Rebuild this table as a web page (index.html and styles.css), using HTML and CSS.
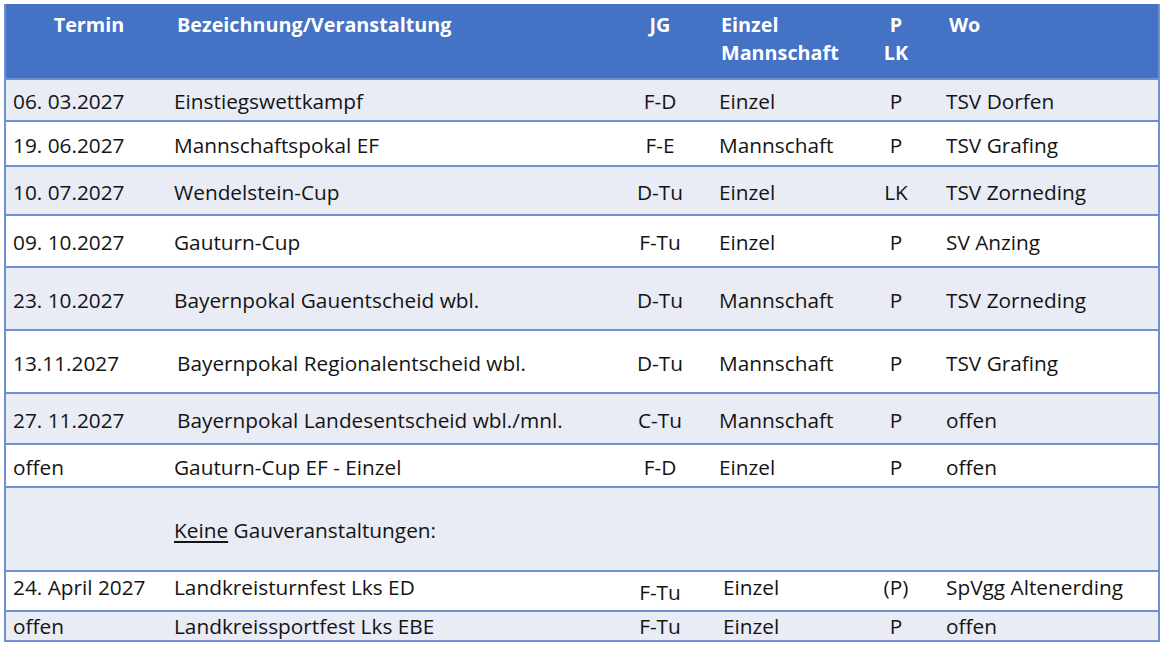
FILE: index.html
```html
<!DOCTYPE html>
<html lang="de">
<head>
<meta charset="utf-8">
<title>Termine</title>
<link rel="stylesheet" href="styles.css">
</head>
<body>
<div class="table">
  <div class="row head">
    <div class="c c1 center">Termin</div>
    <div class="c c2 hpad">Bezeichnung/Veranstaltung</div>
    <div class="c c3 center">JG</div>
    <div class="c c4 hpad4">Einzel<br>Mannschaft</div>
    <div class="c c5 center">P<br>LK</div>
    <div class="c c6 hpad6">Wo</div>
  </div>
  <div class="row band h42">
    <div class="c c1">06. 03.2027</div>
    <div class="c c2">Einstiegswettkampf</div>
    <div class="c c3 center">F-D</div>
    <div class="c c4">Einzel</div>
    <div class="c c5 center">P</div>
    <div class="c c6">TSV Dorfen</div>
  </div>
  <div class="row h45">
    <div class="c c1">19. 06.2027</div>
    <div class="c c2">Mannschaftspokal EF</div>
    <div class="c c3 center">F-E</div>
    <div class="c c4">Mannschaft</div>
    <div class="c c5 center">P</div>
    <div class="c c6">TSV Grafing</div>
  </div>
  <div class="row band h49">
    <div class="c c1">10. 07.2027</div>
    <div class="c c2">Wendelstein-Cup</div>
    <div class="c c3 center">D-Tu</div>
    <div class="c c4">Einzel</div>
    <div class="c c5 center">LK</div>
    <div class="c c6">TSV Zorneding</div>
  </div>
  <div class="row h52">
    <div class="c c1">09. 10.2027</div>
    <div class="c c2">Gauturn-Cup</div>
    <div class="c c3 center">F-Tu</div>
    <div class="c c4">Einzel</div>
    <div class="c c5 center">P</div>
    <div class="c c6">SV Anzing</div>
  </div>
  <div class="row band h63">
    <div class="c c1">23. 10.2027</div>
    <div class="c c2">Bayernpokal Gauentscheid wbl.</div>
    <div class="c c3 center">D-Tu</div>
    <div class="c c4">Mannschaft</div>
    <div class="c c5 center">P</div>
    <div class="c c6">TSV Zorneding</div>
  </div>
  <div class="row h63">
    <div class="c c1">13.11.2027</div>
    <div class="c c2 ind">Bayernpokal Regionalentscheid wbl.</div>
    <div class="c c3 center">D-Tu</div>
    <div class="c c4">Mannschaft</div>
    <div class="c c5 center">P</div>
    <div class="c c6">TSV Grafing</div>
  </div>
  <div class="row band h51">
    <div class="c c1">27. 11.2027</div>
    <div class="c c2 ind">Bayernpokal Landesentscheid wbl./mnl.</div>
    <div class="c c3 center">C-Tu</div>
    <div class="c c4">Mannschaft</div>
    <div class="c c5 center">P</div>
    <div class="c c6">offen</div>
  </div>
  <div class="row h43">
    <div class="c c1">offen</div>
    <div class="c c2">Gauturn-Cup EF - Einzel</div>
    <div class="c c3 center">F-D</div>
    <div class="c c4">Einzel</div>
    <div class="c c5 center">P</div>
    <div class="c c6">offen</div>
  </div>
  <div class="row band h84">
    <div class="c c1"></div>
    <div class="c c2"><span class="u">Keine</span>&nbsp;Gauveranstaltungen:</div>
    <div class="c c3"></div>
    <div class="c c4"></div>
    <div class="c c5"></div>
    <div class="c c6"></div>
  </div>
  <div class="row h40 top">
    <div class="c c1">24. April 2027</div>
    <div class="c c2">Landkreisturnfest Lks ED</div>
    <div class="c c3 center low">F-Tu</div>
    <div class="c c4 ind4">Einzel</div>
    <div class="c c5 center">(P)</div>
    <div class="c c6">SpVgg Altenerding</div>
  </div>
  <div class="row band h30 last">
    <div class="c c1">offen</div>
    <div class="c c2">Landkreissportfest Lks EBE</div>
    <div class="c c3 center">F-Tu</div>
    <div class="c c4 ind4">Einzel</div>
    <div class="c c5 center">P</div>
    <div class="c c6">offen</div>
  </div>
</div>
</body>
</html>
```

FILE: styles.css
```css
html, body {
  margin: 0;
  padding: 0;
  background: #ffffff;
}
body {
  padding: 4px 4px 0 4px;
  font-family: "Open Sans", "Liberation Sans", sans-serif;
  font-size: 20.8px;
  color: #141414;
}
.table {
  width: 1156px;
  box-sizing: border-box;
  border-left: 2px solid #6f8fd0;
  border-right: 2px solid #6f8fd0;
}
.row {
  display: grid;
  grid-template-columns: 159px 455px 80px 155px 82px 221px;
  box-sizing: border-box;
  border-bottom: 2px solid #6f8fd0;
  background: #ffffff;
}
.band {
  background: #e9ebf5;
}
.head {
  background: #4472c4;
  color: #ffffff;
  font-weight: 700;
  font-size: 19.8px;
  height: 76px;
}
.head .c {
  display: block;
  padding-top: 7px;
  line-height: 28px;
}
.head .center { text-align: center; }
.c {
  display: flex;
  align-items: center;
  line-height: 24px;
  padding-top: 2px;
  white-space: nowrap;
  box-sizing: border-box;
}
.c1 { padding-left: 7px; }
.c2 { padding-left: 9px; }
.c4 { padding-left: 19px; }
.c6 { padding-left: 9px; }
.center { justify-content: center; }
.head .hpad { padding-left: 12px; }
.head .hpad4 { padding-left: 21px; }
.head .hpad6 { padding-left: 12px; }
.ind { padding-left: 12px; }
.ind4 { padding-left: 23px; }
.u { text-decoration: underline; text-underline-offset: 3px; }
.top .c { align-items: flex-start; padding-top: 3px; }
.top .low { align-items: flex-end; padding-top: 0; padding-bottom: 6px; }
.last .c { padding-top: 0; }
.h42 { height: 42px; }
.h45 { height: 45px; }
.h49 { height: 49px; }
.h52 { height: 52px; }
.h63 { height: 63px; }
.h51 { height: 51px; }
.h43 { height: 43px; }
.h84 { height: 84px; }
.h40 { height: 40px; }
.h30 { height: 30px; }
```
